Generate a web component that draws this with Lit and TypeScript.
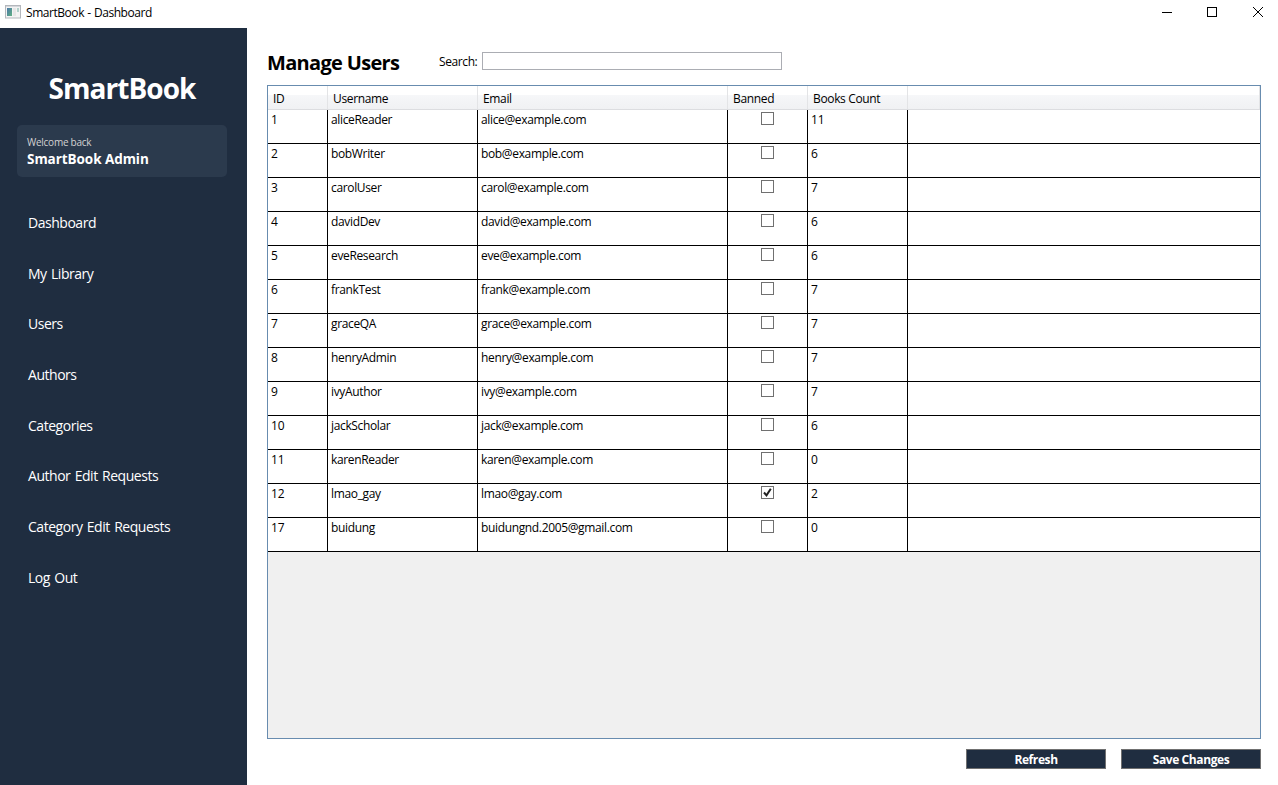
import { LitElement, html, css, svg, nothing } from "lit";
import { customElement } from "lit/decorators.js";

type User = [id: number, name: string, email: string, banned: boolean, books: number];

const USERS: User[] = [
  [1, "aliceReader", "alice@example.com", false, 11],
  [2, "bobWriter", "bob@example.com", false, 6],
  [3, "carolUser", "carol@example.com", false, 7],
  [4, "davidDev", "david@example.com", false, 6],
  [5, "eveResearch", "eve@example.com", false, 6],
  [6, "frankTest", "frank@example.com", false, 7],
  [7, "graceQA", "grace@example.com", false, 7],
  [8, "henryAdmin", "henry@example.com", false, 7],
  [9, "ivyAuthor", "ivy@example.com", false, 7],
  [10, "jackScholar", "jack@example.com", false, 6],
  [11, "karenReader", "karen@example.com", false, 0],
  [12, "lmao_gay", "lmao@gay.com", true, 2],
  [17, "buidung", "buidungnd.2005@gmail.com", false, 0],
];

const NAV = [
  "Dashboard",
  "My Library",
  "Users",
  "Authors",
  "Categories",
  "Author Edit Requests",
  "Category Edit Requests",
  "Log Out",
];

@customElement("user-grid")
export class UserGrid extends LitElement {
  static styles = css`
    :host { display: flex; flex-direction: column; box-sizing: border-box; border: 1px solid #688caf; background: #f0f0f0; font-size: 12px; line-height: 16px; letter-spacing: -0.35px; }
    .row, .head { display: grid; grid-template-columns: 60px 150px 250px 80px 100px 1fr; }
    .head { height: 24px; box-sizing: border-box; border-bottom: 1px solid #dcdde0; background: linear-gradient(#fff 0 9px, #f6f7f9 9px, #f0f1f3 23px); }
    .head span { padding: 5px 0 0 5px; border-right: 1px solid #e3e4e6; }
    .row { height: 34px; box-sizing: border-box; border-bottom: 1px solid #000; background: #fff; }
    .row span { padding: 2px 0 0 3px; border-right: 1px solid #000; }
    .row span:last-child { border-right: 0; }
    .row .num { letter-spacing: -0.15px; }
    .row .check { padding: 2px 0 0; display: flex; justify-content: center; }
    svg { display: block; }
  `;

  render() {
    return html`
      <div class="head">
        <span>ID</span><span>Username</span><span>Email</span><span>Banned</span><span>Books Count</span><span></span>
      </div>
      ${USERS.map(
        ([id, name, email, banned, books]) => html`
          <div class="row">
            <span class="num">${id}</span><span>${name}</span><span>${email}</span>
            <span class="check">
              <svg width="13" height="13" viewBox="0 0 13 13">
                <rect x=".5" y=".5" width="12" height="12" fill="#fff" stroke="#707070" />
                ${banned ? svg`<path d="M3 6.5 5.5 9.3 9.8 2.8" fill="none" stroke="#212121" stroke-width="2" />` : nothing}
              </svg>
            </span>
            <span class="num">${books}</span><span></span>
          </div>
        `
      )}
    `;
  }
}

@customElement("app-root")
export class AppRoot extends LitElement {
  static styles = css`
    :host { display: flex; flex-direction: column; width: 1278px; height: 785px; overflow: hidden; background: #fff; color: #000; font-family: "Open Sans", "Noto Sans", sans-serif; font-size: 12px; line-height: 16px; }
    .titlebar { height: 28px; flex: none; display: flex; box-sizing: border-box; padding-left: 5px; }
    .app-icon { margin: 5px 5px 0 0; }
    .caption { flex: 1; padding-top: 5px; letter-spacing: -0.45px; word-spacing: 0.6px; }
    .controls { width: 117px; height: 24px; flex: none; }
    .body { flex: 1; display: flex; min-height: 0; }
    .side { width: 247px; box-sizing: border-box; flex: none; background: #1f2d40; color: #fff; padding: 40px 20px 0 17px; }
    .brand { height: 40px; line-height: 40px; font-size: 28px; font-weight: 700; text-align: center; letter-spacing: -0.95px; }
    .card { margin-top: 17px; height: 52px; box-sizing: border-box; padding: 10px; border-radius: 5px; background: #2b3a4d; }
    .hello { font-size: 10px; line-height: 15px; letter-spacing: -0.26px; color: #d3d3d3; }
    .who { font-size: 13.5px; line-height: 18px; font-weight: 700; letter-spacing: -0.06px; }
    .nav { margin-top: 21px; padding-left: 11px; font-size: 14px; letter-spacing: -0.47px; word-spacing: 1.2px; }
    .nav div { height: 50.67px; line-height: 50.67px; }
    .main { flex: 1; display: flex; flex-direction: column; padding: 22px 17px 16px 20px; }
    .tools { height: 35px; display: flex; }
    h1 { margin: 0; width: 172px; font-size: 20px; line-height: 26px; font-weight: 700; letter-spacing: -0.68px; }
    .label { width: 43px; padding-top: 4px; letter-spacing: -0.4px; }
    .search { width: 300px; height: 18px; margin-top: 2px; box-sizing: border-box; border: 1px solid #abadb3; }
    user-grid { flex: 1; }
    .actions { display: flex; justify-content: flex-end; gap: 15px; margin-top: 10px; }
    .button { width: 140px; height: 20px; box-sizing: border-box; border: 1px solid #707070; background: #1f2d40; color: #fff; font-weight: 700; line-height: 19px; text-align: center; letter-spacing: -0.4px; }
  `;

  render() {
    return html`
      <div class="titlebar">
        <svg class="app-icon" width="16" height="14" viewBox="0 0 16 14">
          <defs>
            <linearGradient id="pane" x1="0" y1="0" x2="1" y2="1">
              <stop offset="0" stop-color="#4a78a8" /><stop offset="1" stop-color="#61b082" />
            </linearGradient>
          </defs>
          <rect x=".5" y=".5" width="15" height="12.5" fill="#f3f3f3" stroke="#b4b7bc" />
          <path d="M1 1.5H15" stroke="#d4d7db" />
          <rect x="2" y="3" width="5" height="8" fill="url(#pane)" />
          <rect x="8" y="3" width="3" height="8" fill="#e6e6e6" />
          <rect x="12" y="3" width="2" height="4" fill="#b3d1cb" />
        </svg>
        <div class="caption">SmartBook - Dashboard</div>
        <svg class="controls" viewBox="0 0 117 24" fill="none" stroke="#000">
          <path d="M1 12.5h10" />
          <rect x="46.5" y="7.5" width="9" height="9" />
          <path d="m92 7 10 10M102 7 92 17" />
        </svg>
      </div>
      <div class="body">
        <div class="side">
          <div class="brand">SmartBook</div>
          <div class="card">
            <div class="hello">Welcome back</div>
            <div class="who">SmartBook Admin</div>
          </div>
          <div class="nav">${NAV.map((n) => html`<div>${n}</div>`)}</div>
        </div>
        <div class="main">
          <div class="tools">
            <h1>Manage Users</h1>
            <div class="label">Search:</div>
            <div class="search"></div>
          </div>
          <user-grid></user-grid>
          <div class="actions">
            <div class="button">Refresh</div>
            <div class="button">Save Changes</div>
          </div>
        </div>
      </div>
    `;
  }
}
